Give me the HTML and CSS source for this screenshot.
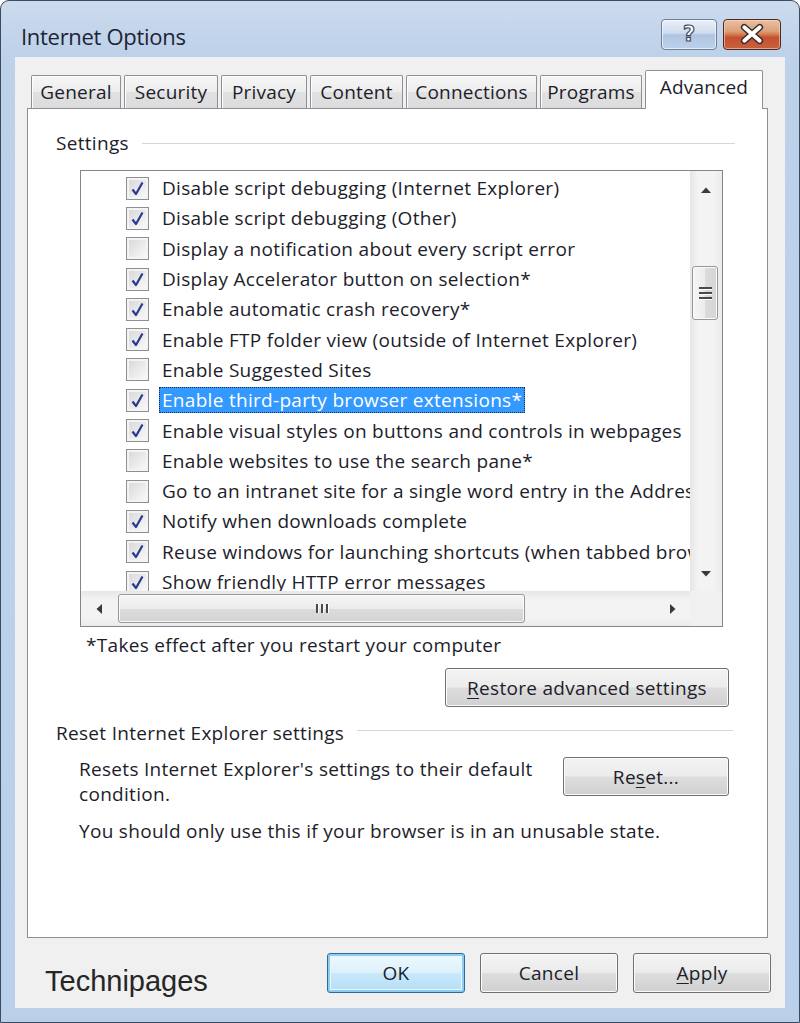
FILE: index.html
```html
<!DOCTYPE html>
<html>
<head>
<meta charset="utf-8">
<link rel="stylesheet" href="styles.css">
</head>
<body>
<div class="window">
  <div class="titlebar">
    <span class="title">Internet Options</span>
    <div class="caption">
      <div class="cap-btn help"><span class="q">?</span></div>
      <div class="cap-btn close">
        <svg width="58" height="31" viewBox="0 0 58 31">
          <path d="M21 8 L37 22 M37 8 L21 22" stroke="#3b2a26" stroke-width="7" stroke-linecap="round" fill="none"/>
          <path d="M21 8 L37 22 M37 8 L21 22" stroke="#ffffff" stroke-width="4" stroke-linecap="round" fill="none"/>
        </svg>
      </div>
    </div>
  </div>
  <div class="client">
    <div class="tabs">
      <div class="tab t-general">General</div>
      <div class="tab t-security">Security</div>
      <div class="tab t-privacy">Privacy</div>
      <div class="tab t-content">Content</div>
      <div class="tab t-connections">Connections</div>
      <div class="tab t-programs">Programs</div>
      <div class="tab active t-advanced">Advanced</div>
    </div>
    <div class="panel">
      <div class="group-head settings-head"><span>Settings</span><span class="rule"></span></div>
      <div class="listbox">
        <div class="list-main">
          <div class="list-items">
            <div class="row"><span class="cb on"></span><span class="lbl">Disable script debugging (Internet Explorer)</span></div>
            <div class="row"><span class="cb on"></span><span class="lbl">Disable script debugging (Other)</span></div>
            <div class="row"><span class="cb"></span><span class="lbl">Display a notification about every script error</span></div>
            <div class="row"><span class="cb on"></span><span class="lbl">Display Accelerator button on selection*</span></div>
            <div class="row"><span class="cb on"></span><span class="lbl">Enable automatic crash recovery*</span></div>
            <div class="row"><span class="cb on"></span><span class="lbl">Enable FTP folder view (outside of Internet Explorer)</span></div>
            <div class="row"><span class="cb"></span><span class="lbl">Enable Suggested Sites</span></div>
            <div class="row"><span class="cb on"></span><span class="lbl selected">Enable third-party browser extensions*</span></div>
            <div class="row"><span class="cb on"></span><span class="lbl">Enable visual styles on buttons and controls in webpages</span></div>
            <div class="row"><span class="cb"></span><span class="lbl">Enable websites to use the search pane*</span></div>
            <div class="row"><span class="cb"></span><span class="lbl">Go to an intranet site for a single word entry in the Address bar</span></div>
            <div class="row"><span class="cb on"></span><span class="lbl">Notify when downloads complete</span></div>
            <div class="row"><span class="cb on"></span><span class="lbl">Reuse windows for launching shortcuts (when tabbed browsing is off)</span></div>
            <div class="row"><span class="cb on"></span><span class="lbl">Show friendly HTTP error messages</span></div>
          </div>
          <div class="vscroll">
            <div class="sb-btn v-up"><svg width="12" height="8" viewBox="0 0 12 8"><path d="M1 7 L6 1.5 L11 7 Z" fill="#3a3a3a"/></svg></div>
            <div class="v-track">
              <div class="v-thumb">
                <span class="grip-h"></span><span class="grip-h"></span><span class="grip-h"></span>
              </div>
            </div>
            <div class="sb-btn v-down"><svg width="12" height="8" viewBox="0 0 12 8"><path d="M1 1 L6 6.5 L11 1 Z" fill="#3a3a3a"/></svg></div>
          </div>
        </div>
        <div class="hscroll">
          <div class="sb-btn h-left"><svg width="8" height="12" viewBox="0 0 8 12"><path d="M7 1 L1.5 6 L7 11 Z" fill="#3a3a3a"/></svg></div>
          <div class="h-track">
            <div class="h-thumb">
              <span class="grip-v"></span><span class="grip-v"></span><span class="grip-v"></span>
            </div>
          </div>
          <div class="sb-btn h-right"><svg width="8" height="12" viewBox="0 0 8 12"><path d="M1 1 L6.5 6 L1 11 Z" fill="#3a3a3a"/></svg></div>
          <div class="corner"></div>
        </div>
      </div>
      <div class="note">*Takes effect after you restart your computer</div>
      <div class="btn restore-btn"><u>R</u>estore advanced settings</div>
      <div class="group-head reset-head"><span>Reset Internet Explorer settings</span><span class="rule"></span></div>
      <div class="reset-body">
        <div class="reset-text">Resets Internet Explorer's settings to their default<br>condition.</div>
        <div class="btn reset-btn">Re<u>s</u>et...</div>
      </div>
      <div class="reset-note">You should only use this if your browser is in an unusable state.</div>
    </div>
    <div class="footer">
      <span class="brand">Technipages</span>
      <div class="footer-btns">
        <div class="btn default-btn">OK</div>
        <div class="btn">Cancel</div>
        <div class="btn"><u>A</u>pply</div>
      </div>
    </div>
  </div>
</div>
</body>
</html>
```

FILE: styles.css
```css
html, body {
  margin: 0;
  padding: 0;
  background: #ffffff;
}

body {
  font-family: "Open Sans", "Noto Sans", sans-serif;
  color: #1d1d2b;
}

.window {
  box-sizing: border-box;
  width: 800px;
  height: 1023px;
  border: 1px solid #3a4a60;
  border-radius: 9px 9px 0 0;
  background: linear-gradient(180deg, #cddbee 0%, #bdd1e9 5%, #bad0ea 100%);
  padding: 0 14px 14px 14px;
  display: flex;
  flex-direction: column;
}

.titlebar {
  height: 56px;
  display: flex;
  justify-content: space-between;
  align-items: flex-start;
}

.title {
  margin: 21px 0 0 6px;
  font-size: 22px;
  line-height: 28px;
  letter-spacing: -0.3px;
  color: #1c2434;
}

.caption {
  display: flex;
  gap: 6px;
  margin: 18px 4px 0 0;
}

.cap-btn {
  box-sizing: border-box;
  height: 31px;
  border-radius: 4px;
  display: flex;
  align-items: center;
  justify-content: center;
}

.help {
  width: 56px;
  border: 1px solid #6e8098;
  background: linear-gradient(180deg, #eaf1f9 0%, #cfdcee 45%, #aec4e0 52%, #bcd2ec 100%);
  box-shadow: inset 0 0 0 1px rgba(255,255,255,0.6);
}

.help .q {
  font-family: "DejaVu Sans", sans-serif;
  font-weight: bold;
  font-size: 21px;
  line-height: 1;
  color: #ffffff;
  -webkit-text-stroke: 1.2px #3f4c60;
}

.close {
  width: 58px;
  border: 1px solid #4a2a22;
  background: linear-gradient(180deg, #e9c0a2 0%, #dba27c 38%, #d47a4e 50%, #c5502f 60%, #c9603c 100%);
  box-shadow: inset 0 0 0 1px rgba(255,220,200,0.55);
}

.client {
  flex: 1;
  background: #f0f0f0;
  display: flex;
  flex-direction: column;
  padding-top: 14px;
}

/* Tabs */
.tabs {
  display: flex;
  align-items: flex-end;
  gap: 3px;
  height: 37px;
  margin-left: 16px;
  position: relative;
  z-index: 1;
}

.tab {
  box-sizing: border-box;
  height: 33px;
  border: 1px solid #8c8f98;
  border-bottom: none;
  border-radius: 2px 2px 0 0;
  background: linear-gradient(180deg, #f6f6f6 0%, #ededed 50%, #e1e1e1 51%, #dcdcdc 100%);
  box-shadow: inset 1px 1px 0 #fdfdfd;
  font-size: 19px;
  line-height: 26px;
  letter-spacing: 0.2px;
  padding-top: 3px;
  text-align: center;
  color: #1d1d2b;
  white-space: nowrap;
}

.tab.active {
  height: 39px;
  margin-bottom: -1px;
  background: #ffffff;
  box-shadow: none;
  padding-top: 3px;
}

.t-general { width: 90px; }
.t-security { width: 94px; }
.t-privacy { width: 86px; }
.t-content { width: 93px; }
.t-connections { width: 131px; }
.t-programs { width: 102px; }
.t-advanced { width: 118px; }

/* Panel */
.panel {
  box-sizing: border-box;
  margin: 0 17px 0 12px;
  height: 830px;
  border: 1px solid #8c8f98;
  background: #ffffff;
  display: flex;
  flex-direction: column;
  font-size: 19px;
  letter-spacing: 0.3px;
}

.group-head {
  display: flex;
  align-items: center;
  height: 24px;
  line-height: 24px;
  white-space: nowrap;
}

.settings-head {
  margin: 22px 32px 0 28px;
}

.reset-head {
  margin: 14px 34px 0 28px;
}

.group-head .rule {
  flex: 1;
  height: 0;
  border-top: 1px solid #d3d8dd;
  margin-left: 13px;
}

.reset-head .rule {
  margin-bottom: 6px;
}

/* Listbox */
.listbox {
  box-sizing: border-box;
  margin: 15px 0 0 52px;
  width: 643px;
  height: 457px;
  border: 1px solid #82878f;
  display: flex;
  flex-direction: column;
  background: #ffffff;
}

.list-main {
  display: flex;
  height: 420px;
}

.list-items {
  flex: 1;
  overflow: hidden;
  padding-top: 2px;
}

.row {
  height: 30.3px;
  display: flex;
  align-items: center;
  padding-left: 45px;
  white-space: nowrap;
}

.cb {
  box-sizing: border-box;
  flex: none;
  width: 23px;
  height: 23px;
  border: 1px solid #8e8f92;
  background: linear-gradient(135deg, #d6d6d6 0%, #e9e9e9 50%, #fbfbfb 100%);
  box-shadow: inset 0 0 0 2px #f4f4f4;
  margin-right: 10px;
  position: relative;
}

.cb.on::after {
  content: "";
  position: absolute;
  left: 4px;
  top: 3px;
  width: 13px;
  height: 15px;
  background: url("data:image/svg+xml;utf8,<svg xmlns='http://www.w3.org/2000/svg' width='13' height='15' viewBox='0 0 13 15'><path d='M1.5 8.5 L5 13 L11.5 1.5' stroke='%232b3891' stroke-width='2.2' fill='none' stroke-linejoin='round'/></svg>") no-repeat;
}

.lbl {
  line-height: 24px;
  padding: 0 2px;
  border: 1px dotted transparent;
}

.lbl.selected {
  background: #3399ff;
  color: #ffffff;
  border: 1px dotted #1a2a55;
}

/* Scrollbars */
.vscroll {
  width: 32px;
  flex: none;
  display: flex;
  flex-direction: column;
  background: linear-gradient(90deg, #e6e6e6 0%, #f3f3f3 25%, #f3f3f3 75%, #ebebeb 100%);
}

.sb-btn {
  display: flex;
  align-items: center;
  justify-content: center;
}

.v-up { height: 37px; }
.v-down { height: 35px; }

.v-track {
  flex: 1;
}

.v-thumb {
  box-sizing: border-box;
  margin: 58px 0 0 2px;
  width: 26px;
  height: 54px;
  border: 1px solid #979797;
  border-radius: 3px;
  background: linear-gradient(90deg, #f5f5f5 0%, #ececec 50%, #dcdcdc 51%, #d4d4d4 100%);
  box-shadow: inset 0 0 0 1px #fbfbfb;
  display: flex;
  flex-direction: column;
  align-items: center;
  justify-content: center;
  gap: 3px;
}

.grip-h {
  width: 13px;
  height: 2px;
  background: #4a4a4a;
  box-shadow: 0 1px 0 #ffffff;
}

.hscroll {
  flex: 1;
  display: flex;
  background: linear-gradient(180deg, #e6e6e6 0%, #f3f3f3 25%, #f3f3f3 75%, #ebebeb 100%);
}

.h-left { width: 35px; }
.h-right { width: 34px; }

.h-track {
  flex: 1;
  display: flex;
  align-items: center;
}

.h-thumb {
  box-sizing: border-box;
  margin-left: 2px;
  width: 407px;
  height: 29px;
  border: 1px solid #979797;
  border-radius: 3px;
  background: linear-gradient(180deg, #f5f5f5 0%, #ececec 50%, #dcdcdc 51%, #d4d4d4 100%);
  box-shadow: inset 0 0 0 1px #fbfbfb;
  display: flex;
  align-items: center;
  justify-content: center;
  gap: 3px;
}

.grip-v {
  width: 2px;
  height: 9px;
  background: #4a4a4a;
  box-shadow: 1px 0 0 #ffffff;
}

.corner {
  width: 32px;
  background: #f0f0f0;
}

/* Text blocks */
.note {
  margin: 6px 0 0 58px;
  line-height: 24px;
}

.btn {
  box-sizing: border-box;
  height: 39px;
  border: 1px solid #707070;
  border-radius: 3px;
  background: linear-gradient(180deg, #f3f3f3 0%, #ececec 48%, #dddddd 52%, #d0d0d0 100%);
  box-shadow: inset 0 0 0 1px #fbfbfb;
  display: flex;
  align-items: center;
  justify-content: center;
  font-size: 19px;
  letter-spacing: 0.3px;
  color: #1d1d2b;
  white-space: nowrap;
}

.btn u {
  text-decoration-thickness: 1px;
  text-underline-offset: 3px;
}

.restore-btn {
  align-self: flex-end;
  width: 284px;
  margin: 11px 38px 0 0;
}

.reset-body {
  display: flex;
  justify-content: space-between;
  align-items: flex-start;
  margin: 12px 38px 0 51px;
}

.reset-text {
  line-height: 25px;
}

.reset-btn {
  width: 166px;
}

.reset-note {
  margin: 12px 0 0 51px;
  line-height: 25px;
}

/* Footer */
.footer {
  display: flex;
  align-items: flex-start;
  padding: 15px 14px 0 30px;
}

.brand {
  flex: 1;
  margin-top: 11px;
  font-family: "Liberation Sans", Arial, sans-serif;
  font-size: 29px;
  line-height: 34px;
  color: #262626;
}

.footer-btns {
  display: flex;
  gap: 15px;
}

.footer-btns .btn {
  width: 138px;
  height: 40px;
}

.footer-btns .default-btn {
  border: 1px solid #2f6a98;
  background: linear-gradient(180deg, #eef8fe 0%, #ddf1fc 48%, #c7e8fb 52%, #b5def6 100%);
  box-shadow: inset 0 0 0 2px #8ccdf2, inset 0 0 0 3px #e8f6fe;
}
```
